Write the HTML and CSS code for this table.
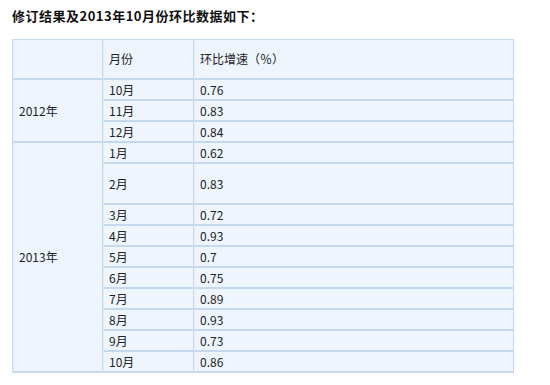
FILE: index.html
```html
<!DOCTYPE html>
<html lang="zh-CN">
<head>
<meta charset="utf-8">
<link rel="stylesheet" href="styles.css">
</head>
<body>
<div class="page">
  <p class="title">修订结果及2013年10月份环比数据如下：</p>
  <table class="data">
    <colgroup><col class="c1"><col class="c2"><col class="c3"></colgroup>
    <tr class="head"><td></td><td>月份</td><td>环比增速（％）</td></tr>
    <tr><td rowspan="3">2012年</td><td>10月</td><td>0.76</td></tr>
    <tr><td>11月</td><td>0.83</td></tr>
    <tr><td>12月</td><td>0.84</td></tr>
    <tr><td rowspan="10">2013年</td><td>1月</td><td>0.62</td></tr>
    <tr class="tall"><td>2月</td><td>0.83</td></tr>
    <tr><td>3月</td><td>0.72</td></tr>
    <tr><td>4月</td><td>0.93</td></tr>
    <tr><td>5月</td><td>0.7</td></tr>
    <tr><td>6月</td><td>0.75</td></tr>
    <tr><td>7月</td><td>0.89</td></tr>
    <tr><td>8月</td><td>0.93</td></tr>
    <tr><td>9月</td><td>0.73</td></tr>
    <tr><td>10月</td><td>0.86</td></tr>
  </table>
</div>
</body>
</html>
```
FILE: styles.css
```css
html, body { margin: 0; padding: 0; background: #fff; }
.page { padding: 8px 0 0 12px; }
.title {
  margin: 0 0 16px 0;
  font-family: "Noto Sans CJK SC", "DejaVu Sans", sans-serif;
  font-weight: bold;
  font-size: 13px;
  line-height: 15px;
  color: #111;
  letter-spacing: 0.5px;
}
.data {
  width: 501px;
  border-collapse: separate;
  border-spacing: 0;
  table-layout: fixed;
  border-left: 1px solid #c9dbef;
  border-bottom: 1px solid #c9dbef;
  background: #eef5fd;
  font-family: "Noto Sans CJK SC", "DejaVu Sans", sans-serif;
  font-size: 12px;
  color: #222;
}
.c1 { width: 90px; }
.c2 { width: 91px; }
.c3 { width: 320px; }
.data td {
  border: 1px solid #c4d8ee;
  border-left-color: #e4eefa;
  padding: 0 0 0 5px;
  height: 19px;
  line-height: 14px;
  vertical-align: middle;
}
.data tr.head td { height: 38px; }
.data tr.tall td { height: 39px; }
```
